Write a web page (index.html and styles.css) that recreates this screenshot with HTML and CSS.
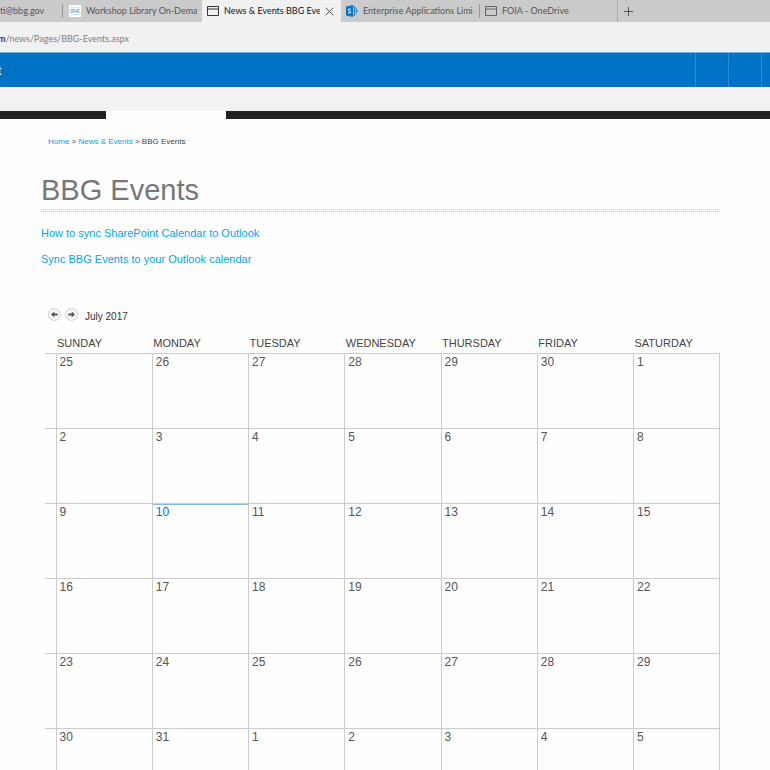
FILE: index.html
```html
<!DOCTYPE html>
<html lang="en">
<head>
<meta charset="utf-8">
<title>BBG Events</title>
<link rel="stylesheet" href="styles.css">
</head>
<body>
<nav class="tabs" aria-label="Open tabs">
  <a class="tab tab-first" href="#"><span class="tab-label">ti@bbg.gov</span></a>
  <a class="tab tab-library" href="#">
    <svg class="icon" width="12" height="12" viewBox="0 0 12 12"><rect width="12" height="12" fill="#fff"/><path d="M1 2.5h10M1 9.5h10" stroke="#d9e6ee" fill="none"/><path d="M2 4.5h2v3H2zM5 7.5v-3l2 3v-3M10.5 4.5h-2v3h2M8.500 6h2" stroke="#6aa7d2" stroke-width=".8" fill="none"/></svg>
    <span class="tab-label">Workshop Library On-Dema</span>
  </a>
  <a class="tab tab-active" href="#" aria-current="page">
    <svg class="icon" width="12" height="12" viewBox="0 0 12 12"><path d="M.5 1.500h11v9H.5zM.5 4h11" stroke="#333" fill="none"/></svg>
    <span class="tab-label">News &amp; Events BBG Eve</span>
    <svg class="close" width="9" height="9" viewBox="0 0 9 9"><path d="M.7.7l7.600 7.600M8.300.7L.7 8.300" stroke="#555" fill="none"/></svg>
  </a>
  <a class="tab tab-apps" href="#">
    <svg class="icon" width="12" height="12" viewBox="0 0 12 12"><path d="M6.500 1.500l2 0 3 4.500-3 4.500h-2" fill="#a9cdea" stroke="#1679c9" stroke-width=".8"/><path d="M7 6h4M8.500 2v8" stroke="#1679c9" stroke-width=".8"/><path d="M0 1.500L7 0v12L0 10.500z" fill="#0873c8"/><path d="M4.800 4.200Q2.300 3.300 2.300 4.800q0 .8 1.300 1.200 1.300.4 1.200 1.300Q4.500 8.500 2.200 7.700" stroke="#fff" fill="none"/></svg>
    <span class="tab-label">Enterprise Applications Limi</span>
  </a>
  <a class="tab tab-drive" href="#">
    <svg class="icon" width="12" height="12" viewBox="0 0 12 12"><path d="M.5 1.500h11v9H.5zM.5 4h11" stroke="#666" fill="none"/></svg>
    <span class="tab-label">FOIA - OneDrive</span>
  </a>
  <button class="new-tab" type="button" aria-label="New tab"><svg width="9" height="9" viewBox="0 0 9 9"><path d="M0 4.500h9M4.500 0v9" stroke="#555" fill="none"/></svg></button>
</nav>
<div class="address"><b>m</b>/news/Pages/BBG-Events.aspx</div>
<header class="suite">
  <span class="suite-name">t</span>
  <span class="suite-cell"></span>
  <span class="suite-cell"></span>
  <span class="suite-cell suite-end"></span>
</header>
<div class="ribbon"></div>
<div class="menu"><span class="menu-left"></span><span class="menu-current"></span><span class="menu-right"></span></div>
<main class="page">
  <nav class="crumbs" aria-label="Breadcrumb"><a href="#">Home</a> &gt; <a href="#">News &amp; Events</a> &gt; BBG Events</nav>
  <h1>BBG Events</h1>
  <div class="rule"></div>
  <p class="sync"><a href="#">How to sync SharePoint Calendar to Outlook</a></p>
  <p class="sync"><a href="#">Sync BBG Events to your Outlook calendar</a></p>
  <section class="calendar" aria-label="Calendar">
    <div class="month">
      <button type="button" aria-label="Previous month"><svg width="13" height="13" viewBox="0 0 13 13"><circle cx="6.500" cy="6.500" r="5.900" fill="#fafafa" stroke="#cdcdcd"/><path d="M3 6.500l3.300-3v2H9.700v2H6.300v2z" fill="#555"/></svg></button>
      <button type="button" aria-label="Next month"><svg width="13" height="13" viewBox="0 0 13 13"><circle cx="6.500" cy="6.500" r="5.900" fill="#fafafa" stroke="#cdcdcd"/><path d="M10 6.500l-3.300-3v2H3.300v2h3.400v2z" fill="#555"/></svg></button>
      <h2>July 2017</h2>
    </div>
    <table>
      <colgroup><col class="col-week"><col><col><col><col><col><col><col class="col-last"></colgroup>
      <thead><tr><td></td><th>SUNDAY</th><th>MONDAY</th><th>TUESDAY</th><th>WEDNESDAY</th><th>THURSDAY</th><th>FRIDAY</th><th>SATURDAY</th></tr></thead>
      <tbody>
        <tr><td></td><td>25</td><td>26</td><td>27</td><td>28</td><td>29</td><td>30</td><td>1</td></tr>
        <tr><td></td><td>2</td><td>3</td><td>4</td><td>5</td><td>6</td><td>7</td><td>8</td></tr>
        <tr><td></td><td>9</td><td class="today">10</td><td>11</td><td>12</td><td>13</td><td>14</td><td>15</td></tr>
        <tr><td></td><td>16</td><td>17</td><td>18</td><td>19</td><td>20</td><td>21</td><td>22</td></tr>
        <tr><td></td><td>23</td><td>24</td><td>25</td><td>26</td><td>27</td><td>28</td><td>29</td></tr>
        <tr><td></td><td>30</td><td>31</td><td>1</td><td>2</td><td>3</td><td>4</td><td>5</td></tr>
      </tbody>
    </table>
  </section>
</main>
</body>
</html>
```
FILE: styles.css
```css
* { box-sizing: border-box; }

body {
  margin: 0;
  height: 100vh;
  overflow: hidden;
  background: #fefefe;
  color: #444;
  font-family: "Liberation Sans", Arial, sans-serif;
}

a { color: #00a6f4; text-decoration: none; }

button { padding: 0; border: 0; background: none; }

svg { display: block; flex: none; }

/* Browser tabs */
.tabs {
  display: flex;
  align-items: center;
  height: 22px;
  background: #cbcbcb;
  font: 9px/12px Lato, "Open Sans", sans-serif;
}

.tab {
  display: flex;
  flex: 0 0 138px;
  align-items: center;
  gap: 5px;
  height: 100%;
  padding: 0 5px;
  overflow: hidden;
  color: #555;
  white-space: nowrap;
}

.tab-label { overflow: hidden; }
.tab-first { flex-basis: 63px; padding-left: 0; }
.tab-first::after {
  content: "";
  width: 1px;
  height: 14px;
  margin-right: -5px;
  margin-left: auto;
  background: #999;
}
.tab-library { flex-basis: 139px; padding-left: 6px; }
.tab-active { flex-basis: 139px; background: #f1f1f1; color: #111; }
.close { margin-left: auto; margin-right: 2px; }
.tab-drive { flex-basis: 139px; border-right: 1px solid #aaa; }
.tab-drive::before {
  content: "";
  width: 1px;
  height: 14px;
  margin-left: -5px;
  background: #999;
}
.new-tab { margin-left: 6px; }

.address {
  height: 30px;
  padding-top: 10px;
  background: #f1f1f1;
  color: #808080;
  font: 9px/13px Lato, "Open Sans", sans-serif;
}
.address b { margin-left: -2px; color: #333; }

/* Suite bar */
.suite {
  display: flex;
  height: 35px;
  border-top: 1px solid #6db2df;
  background: #0072c6;
  color: #fff;
}
.suite-name { margin: 11px auto 0 -2px; font-size: 12px; line-height: 14px; }
.suite-cell { width: 33px; border-left: 1px solid #2d8bd0; }
.suite-end { width: 9px; }

.ribbon { height: 24px; background: #f2f2f2; }

.menu { display: flex; height: 8px; }
.menu-left { width: 106px; background: #202020; }
.menu-current { width: 120px; }
.menu-right { flex: 1; background: #202020; }

/* Page content */
.page { padding: 17px 50px 0 41px; }

.crumbs { padding-left: 7px; font-size: 8px; line-height: 12px; }

h1 {
  margin: 25px 0 0;
  color: #777;
  font-size: 29px;
  font-weight: 400;
  line-height: 34px;
}

.rule {
  height: 3px;
  margin: 2px 0 13px;
  border: dotted #c8c8c8;
  border-width: 1px 0;
}

.sync { margin: 0 0 10px; font-size: 11px; line-height: 16px; }

.calendar { margin: 39px 0 0 4px; }

.month { display: flex; align-items: center; gap: 4px; height: 17px; padding-left: 3px; }
.month h2 {
  margin: 4px 0 0 3px;
  color: #333;
  font-size: 10px;
  font-weight: 400;
  line-height: 12px;
}

table {
  width: 100%;
  margin-top: 12px;
  border-collapse: collapse;
  table-layout: fixed;
}
.col-week { width: 11px; }
.col-last { width: 86px; }

th {
  height: 18px;
  padding: 0 0 2px 1px;
  font-size: 11px;
  font-weight: 400;
  line-height: 14px;
  text-align: left;
}
thead td { padding: 0; }

tbody td {
  height: 75px;
  padding: 1px 0 0 3px;
  border: 1px solid #ccc;
  color: #555;
  font-size: 12px;
  line-height: 14px;
  vertical-align: top;
}
tbody td:first-child { padding: 0; border-left: 0; }
tbody td.today { border-top-color: #888; box-shadow: inset 0 1px #8abce2; color: #0072c6; }
```
